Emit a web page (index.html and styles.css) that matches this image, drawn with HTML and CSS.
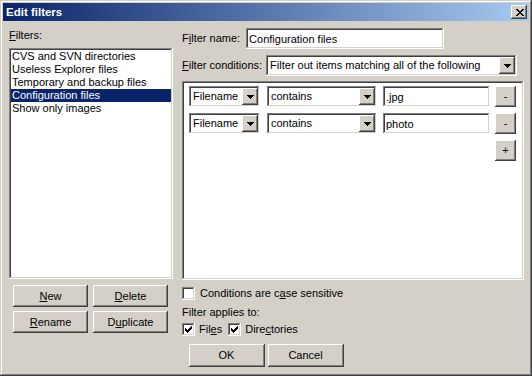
FILE: index.html
```html
<!DOCTYPE html>
<html lang="en">
<head>
    <meta charset="UTF-8">
    <title>Edit filters</title>
    <link rel="stylesheet" href="styles.css">
</head>
<body>
    <div class="window">
        <div class="titlebar">
            <span class="title">Edit filters</span>
            <button class="close-btn raised">
                <svg width="8" height="7" viewBox="0 0 8 7" shape-rendering="crispEdges"><path fill="#000" d="M0 0h2v1H0zM6 0h2v1H6zM1 1h2v1H1zM5 1h2v1H5zM2 2h4v1H2zM3 3h2v1H3zM2 4h4v1H2zM1 5h2v1H1zM5 5h2v1H5zM0 6h2v1H0zM6 6h2v1H6z"/></svg>
            </button>
        </div>

        <div class="main">
            <div class="left">
                <div class="label"><u>F</u>ilters:</div>
                <div class="listbox sunken">
                    <div class="item">CVS and SVN directories</div>
                    <div class="item">Useless Explorer files</div>
                    <div class="item">Temporary and backup files</div>
                    <div class="item selected">Configuration files</div>
                    <div class="item">Show only images</div>
                </div>
                <div class="btn-grid">
                    <button class="btn raised"><u>N</u>ew</button>
                    <button class="btn raised"><u>D</u>elete</button>
                    <button class="btn raised"><u>R</u>ename</button>
                    <button class="btn raised">D<u>u</u>plicate</button>
                </div>
            </div>

            <div class="right">
                <div class="field-row">
                    <label class="name-label" for="filter-name">F<u>i</u>lter name:</label>
                    <input class="textbox sunken name-input" id="filter-name" type="text" value="Configuration files">
                </div>
                <div class="field-row cond-field">
                    <span class="cond-label"><u>F</u>ilter conditions:</span>
                    <div class="combo sunken cond-combo">
                        <span class="combo-text">Filter out items matching all of the following</span>
                        <span class="drop raised"><svg width="7" height="4" viewBox="0 0 7 4" shape-rendering="crispEdges"><path fill="#000" d="M0 0h7v1H0zM1 1h5v1H1zM2 2h3v1H2zM3 3h1v1H3z"/></svg></span>
                    </div>
                </div>

                <div class="conditions sunken">
                    <div class="cond-row">
                        <div class="combo sunken type-combo">
                            <span class="combo-text">Filename</span>
                            <span class="drop raised"><svg width="7" height="4" viewBox="0 0 7 4" shape-rendering="crispEdges"><path fill="#000" d="M0 0h7v1H0zM1 1h5v1H1zM2 2h3v1H2zM3 3h1v1H3z"/></svg></span>
                        </div>
                        <div class="combo sunken op-combo">
                            <span class="combo-text">contains</span>
                            <span class="drop raised"><svg width="7" height="4" viewBox="0 0 7 4" shape-rendering="crispEdges"><path fill="#000" d="M0 0h7v1H0zM1 1h5v1H1zM2 2h3v1H2zM3 3h1v1H3z"/></svg></span>
                        </div>
                        <input class="textbox sunken value-input" type="text" value=".jpg">
                        <button class="btn raised small-btn">-</button>
                    </div>
                    <div class="cond-row">
                        <div class="combo sunken type-combo">
                            <span class="combo-text">Filename</span>
                            <span class="drop raised"><svg width="7" height="4" viewBox="0 0 7 4" shape-rendering="crispEdges"><path fill="#000" d="M0 0h7v1H0zM1 1h5v1H1zM2 2h3v1H2zM3 3h1v1H3z"/></svg></span>
                        </div>
                        <div class="combo sunken op-combo">
                            <span class="combo-text">contains</span>
                            <span class="drop raised"><svg width="7" height="4" viewBox="0 0 7 4" shape-rendering="crispEdges"><path fill="#000" d="M0 0h7v1H0zM1 1h5v1H1zM2 2h3v1H2zM3 3h1v1H3z"/></svg></span>
                        </div>
                        <input class="textbox sunken value-input" type="text" value="photo">
                        <button class="btn raised small-btn">-</button>
                    </div>
                    <div class="cond-row add-row">
                        <button class="btn raised small-btn">+</button>
                    </div>
                </div>

                <div class="check-row case-row">
                    <span class="checkbox sunken"></span>
                    <span>Conditions are c<u>a</u>se sensitive</span>
                </div>
                <div class="label applies-label">Filter applies to:</div>
                <div class="check-row applies-row">
                    <span class="checkbox sunken"><svg width="7" height="7" viewBox="0 0 7 7" shape-rendering="crispEdges"><path fill="#000" d="M6 0h1v1H6zM5 1h2v1H5zM0 2h1v1H0zM4 2h3v1H4zM0 3h2v1H0zM3 3h3v1H3zM0 4h5v1H0zM1 5h3v1H1zM2 6h1v1H2z"/></svg></span>
                    <span class="files-text">Fil<u>e</u>s</span>
                    <span class="checkbox sunken"><svg width="7" height="7" viewBox="0 0 7 7" shape-rendering="crispEdges"><path fill="#000" d="M6 0h1v1H6zM5 1h2v1H5zM0 2h1v1H0zM4 2h3v1H4zM0 3h2v1H0zM3 3h3v1H3zM0 4h5v1H0zM1 5h3v1H1zM2 6h1v1H2z"/></svg></span>
                    <span>Dire<u>c</u>tories</span>
                </div>
            </div>
        </div>

        <div class="footer">
            <button class="btn raised footer-btn">OK</button>
            <button class="btn raised footer-btn">Cancel</button>
        </div>
    </div>
</body>
</html>
```

FILE: styles.css
```css
body {
    margin: 0;
    font-family: 'Liberation Sans', Arial, sans-serif;
    font-size: 11px;
    line-height: 13px;
    color: #000;
    background: #d4d0c8;
}
u {
    text-decoration: underline;
    text-underline-offset: 1px;
}
.raised {
    background: #d4d0c8;
    box-shadow: inset -1px -1px #404040, inset 1px 1px #fff, inset -2px -2px #808080, inset 2px 2px #d4d0c8;
}
.sunken {
    background: #fff;
    box-shadow: inset -1px -1px #fff, inset 1px 1px #808080, inset -2px -2px #d4d0c8, inset 2px 2px #404040;
}
.window {
    width: 532px;
    height: 376px;
    box-sizing: border-box;
    padding: 3px;
    background: #d4d0c8;
    box-shadow: inset -1px -1px #404040, inset 1px 1px #d4d0c8, inset -2px -2px #808080, inset 2px 2px #fff;
}
.titlebar {
    height: 18px;
    display: flex;
    align-items: center;
    justify-content: space-between;
    padding: 0 2px 0 2px;
    background: linear-gradient(to right, #0a246a, #a6caf0);
}
.title {
    color: #fff;
    font-weight: bold;
    font-size: 11.5px;
    padding-left: 1px;
}
.close-btn {
    width: 16px;
    height: 14px;
    border: none;
    padding: 0 0 0 0;
    display: flex;
    align-items: center;
    justify-content: center;
}
.close-btn svg {
    display: block;
    margin-left: 1px;
}

.main {
    display: flex;
    align-items: flex-start;
    padding-left: 6px;
    gap: 9px;
}
.left {
    width: 164px;
    padding-top: 8px;
    display: flex;
    flex-direction: column;
}
.label {
    height: 13px;
}
.listbox {
    margin-top: 6px;
    height: 231px;
    box-sizing: border-box;
    padding: 2px;
}
.item {
    height: 13px;
    padding-left: 1px;
    white-space: nowrap;
}
.item.selected {
    background: #0a246a;
    color: #fff;
}
.btn {
    border: none;
    padding: 0;
    font-family: inherit;
    font-size: 11px;
    line-height: 13px;
    color: #000;
}
.btn-grid {
    margin-top: 6px;
    padding-left: 4px;
    display: grid;
    grid-template-columns: 75px 75px;
    grid-auto-rows: 22px;
    column-gap: 5px;
    row-gap: 4px;
}

.right {
    width: 342px;
    padding-top: 7px;
    display: flex;
    flex-direction: column;
}
.field-row {
    display: flex;
    align-items: center;
    height: 21px;
}
.name-label {
    margin-right: 6px;
}
.textbox {
    border: none;
    outline: none;
    margin: 0;
    height: 21px;
    box-sizing: border-box;
    padding: 0 3px;
    font-family: inherit;
    font-size: 11px;
    color: #000;
}
.name-input {
    width: 198px;
}
.cond-field {
    margin-top: 6px;
}
.cond-label {
    margin-right: 4px;
}
.combo {
    height: 21px;
    box-sizing: border-box;
    padding: 2px;
    display: flex;
    align-items: center;
}
.combo-text {
    flex: 1;
    padding-left: 2px;
    white-space: nowrap;
    overflow: hidden;
}
.drop {
    width: 16px;
    height: 17px;
    display: flex;
    align-items: center;
    justify-content: center;
}
.drop svg {
    display: block;
    margin-left: 1px;
}
.cond-combo {
    flex: 1;
    margin-right: 7px;
}

.conditions {
    margin-top: 5px;
    height: 199px;
    box-sizing: border-box;
    padding: 5px 0 0 7px;
    display: flex;
    flex-direction: column;
    gap: 6px;
}
.cond-row {
    display: flex;
    align-items: center;
    height: 21px;
}
.type-combo {
    width: 71px;
}
.op-combo {
    width: 110px;
    margin-left: 7px;
}
.value-input {
    width: 107px;
    margin-left: 6px;
}
.small-btn {
    width: 21px;
    height: 21px;
    margin-left: 5px;
}
.add-row {
    padding-left: 301px;
}

.check-row {
    display: flex;
    align-items: center;
    height: 13px;
}
.checkbox {
    width: 13px;
    height: 13px;
    box-sizing: border-box;
    display: flex;
    align-items: center;
    justify-content: center;
    margin-right: 5px;
}
.checkbox svg {
    display: block;
}
.case-row {
    margin-top: 7px;
}
.applies-label {
    margin-top: 6px;
}
.applies-row {
    margin-top: 4px;
}
.applies-row .checkbox {
    margin-right: 4px;
}
.files-text {
    margin-right: 6px;
}

.footer {
    margin-top: 8px;
    display: flex;
    justify-content: center;
    gap: 3px;
}
.footer-btn {
    width: 76px;
    height: 23px;
}
```
